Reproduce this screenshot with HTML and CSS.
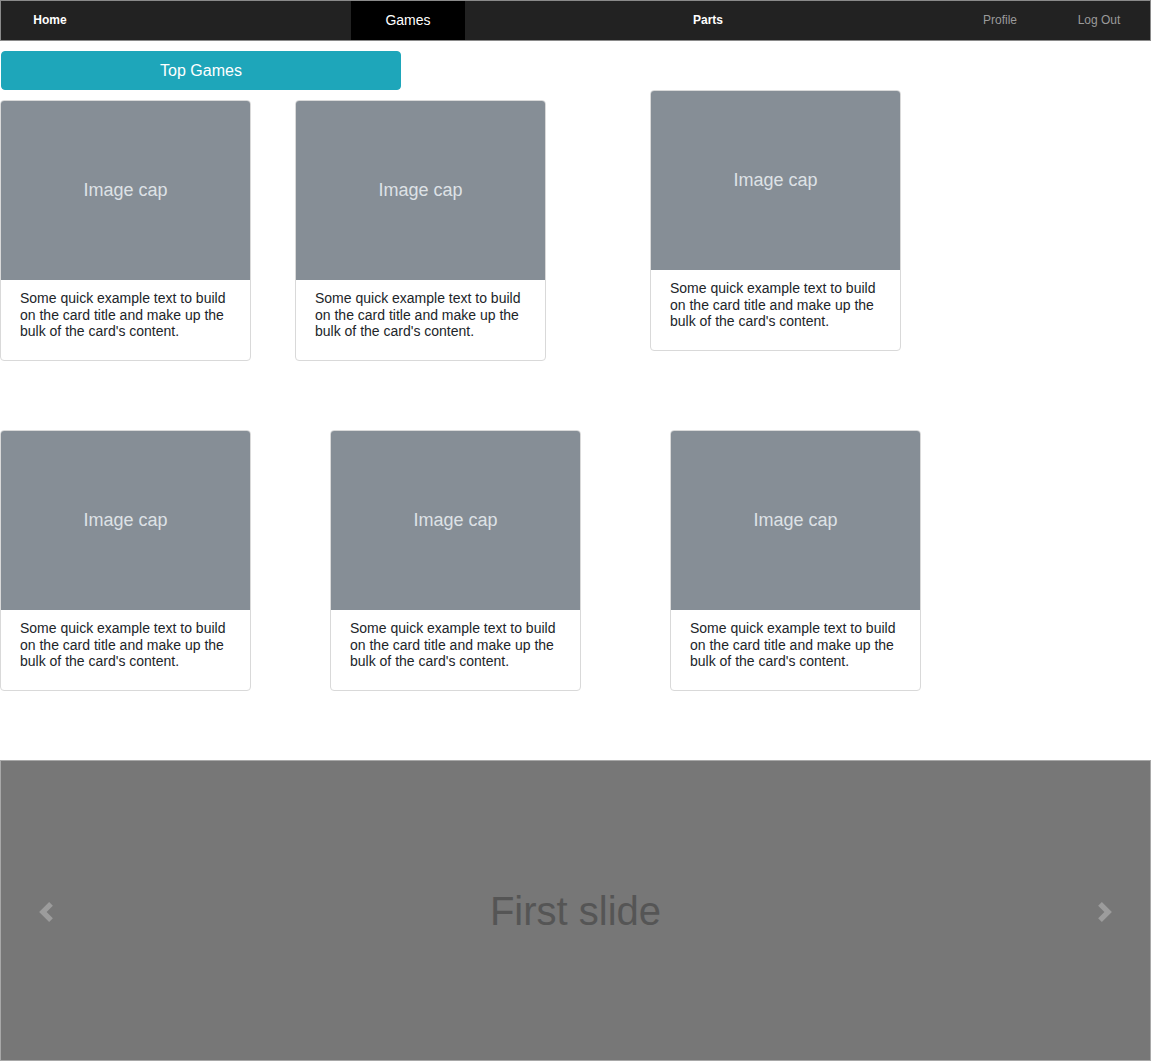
FILE: index.html
```html
<!DOCTYPE html>
<html lang="en">
<head>
<meta charset="utf-8">
<title>Top Games</title>
<link rel="stylesheet" href="styles.css">
</head>
<body>
<nav class="topnav">
  <a class="nav-item nav-home" href="#">Home</a>
  <a class="nav-item nav-games" href="#">Games</a>
  <a class="nav-item nav-parts" href="#">Parts</a>
  <a class="nav-item nav-profile" href="#">Profile</a>
  <a class="nav-item nav-logout" href="#">Log Out</a>
</nav>

<main class="content">
  <button class="btn-top" type="button">Top Games</button>

  <div class="card-row row-one">
    <div class="card card-a">
      <div class="card-img">Image cap</div>
      <div class="card-body"><p>Some quick example text to build on the card title and make up the bulk of the card's content.</p></div>
    </div>
    <div class="card card-b">
      <div class="card-img">Image cap</div>
      <div class="card-body"><p>Some quick example text to build on the card title and make up the bulk of the card's content.</p></div>
    </div>
    <div class="card card-c">
      <div class="card-img">Image cap</div>
      <div class="card-body"><p>Some quick example text to build on the card title and make up the bulk of the card's content.</p></div>
    </div>
  </div>

  <div class="card-row row-two">
    <div class="card card-d">
      <div class="card-img">Image cap</div>
      <div class="card-body"><p>Some quick example text to build on the card title and make up the bulk of the card's content.</p></div>
    </div>
    <div class="card card-e">
      <div class="card-img">Image cap</div>
      <div class="card-body"><p>Some quick example text to build on the card title and make up the bulk of the card's content.</p></div>
    </div>
    <div class="card card-f">
      <div class="card-img">Image cap</div>
      <div class="card-body"><p>Some quick example text to build on the card title and make up the bulk of the card's content.</p></div>
    </div>
  </div>

  <section class="carousel">
    <a class="carousel-control" href="#" aria-label="Previous">
      <svg width="20" height="20" viewBox="0 0 8 8"><path d="M5.25 0l-4 4 4 4 1.5-1.5-2.5-2.5 2.5-2.5-1.5-1.5z"/></svg>
    </a>
    <div class="slide-label">First slide</div>
    <a class="carousel-control" href="#" aria-label="Next">
      <svg width="20" height="20" viewBox="0 0 8 8"><path d="M2.75 0l-1.5 1.5 2.5 2.5-2.5 2.5 1.5 1.5 4-4-4-4z"/></svg>
    </a>
  </section>
</main>
</body>
</html>
```

FILE: styles.css
```css
* { box-sizing: border-box; }

body {
  margin: 0;
  font-family: "Liberation Sans", Arial, sans-serif;
  color: #212529;
  background: #fff;
}

.topnav {
  display: flex;
  align-items: stretch;
  width: 1151px;
  height: 41px;
  background: #222;
  border: 1px solid #8a8a8a;
}

.nav-item {
  display: flex;
  align-items: center;
  justify-content: center;
  padding-bottom: 2px;
  text-decoration: none;
  font-size: 12px;
}

.nav-home {
  width: 98px;
  color: #fff;
  font-weight: bold;
}

.nav-games {
  width: 114px;
  margin-left: 252px;
  background: #000;
  color: #fff;
  font-size: 14px;
}

.nav-parts {
  width: 114px;
  margin-left: 186px;
  color: #fff;
  font-weight: bold;
}

.nav-profile {
  width: 100px;
  margin-left: 185px;
  color: #9a9a9a;
}

.nav-logout {
  width: 98px;
  color: #9a9a9a;
}

.content {
  padding-top: 10px;
}

.btn-top {
  display: block;
  width: 400px;
  height: 39px;
  margin-left: 1px;
  border: 1px solid #1ea6ba;
  border-radius: 4px;
  background: #1ea6ba;
  color: #fff;
  font-family: "Liberation Sans", Arial, sans-serif;
  font-size: 16px;
}

.card-row {
  display: flex;
  align-items: flex-start;
}

.row-one .card-a,
.row-one .card-b { margin-top: 10px; }
.card-b { margin-left: 44px; }
.card-c { margin-left: 104px; }

.row-two { margin-top: 69px; }
.card-e { margin-left: 79px; }
.card-f { margin-left: 89px; }

.card {
  width: 251px;
  height: 261px;
  border: 1px solid #d9d9d9;
  border-radius: 4px;
  overflow: hidden;
  background: #fff;
}

.card-img {
  display: flex;
  align-items: center;
  justify-content: center;
  height: 179px;
  background: #868e96;
  color: #dee2e6;
  font-size: 18px;
}

.card-body {
  padding: 10px 19px 0 19px;
}

.card-body p {
  margin: 0;
  font-size: 14px;
  line-height: 16.5px;
}

.carousel {
  display: flex;
  align-items: center;
  justify-content: space-between;
  width: 1151px;
  height: 301px;
  margin-top: 69px;
  padding: 2px 35px 0 35px;
  background: #777;
  border: 1px solid #a8a8a8;
}

.carousel-control {
  display: flex;
  width: 20px;
  height: 20px;
}

.carousel-control svg { fill: #9c9c9c; }

.slide-label {
  font-size: 40px;
  color: #555;
}
```
